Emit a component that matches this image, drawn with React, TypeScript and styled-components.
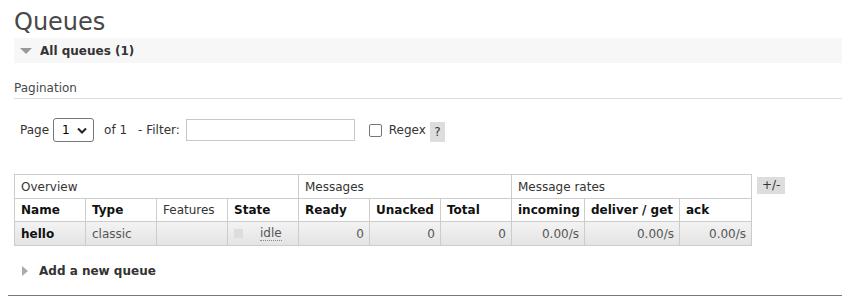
import styled, { createGlobalStyle } from "styled-components";

const Global = createGlobalStyle`
    html, body {
        margin: 0;
        padding: 0;
        background: #fff;
    }
    body {
        font-family: "DejaVu Sans", Verdana, sans-serif;
        font-size: 12px;
        color: #484848;
    }
`;

const Page = styled.div`
    width: 842px;
    height: 297px;
    padding-left: 8px;
    box-sizing: border-box;
    overflow: hidden;
`;

const Main = styled.div`
    padding-left: 6px;
`;

const Title = styled.h1`
    margin: 0;
    padding-top: 8px;
    height: 30px;
    font-size: 24px;
    line-height: 28px;
    font-weight: normal;
    color: #484848;
`;

const SectionBar = styled.div`
    display: flex;
    align-items: center;
    gap: 8px;
    height: 25px;
    padding-left: 6px;
    background: #f7f7f7;
    font-weight: bold;
    color: #333;
`;

const DownArrow = styled.span`
    width: 0;
    height: 0;
    border-left: 6px solid transparent;
    border-right: 6px solid transparent;
    border-top: 6px solid #999;
    margin-top: 1px;
`;

const RightArrow = styled.span`
    width: 0;
    height: 0;
    border-top: 5px solid transparent;
    border-bottom: 5px solid transparent;
    border-left: 6px solid #aaa;
    margin-left: 2px;
`;

const SubHeading = styled.div`
    margin-top: 18px;
    padding-bottom: 3px;
    border-bottom: 1px solid #ddd;
    color: #484848;
    line-height: 14px;
`;

const Controls = styled.div`
    display: flex;
    align-items: center;
    height: 24px;
    margin-top: 19px;
    padding-left: 6px;
    color: #333;
`;

const Select = styled.div`
    display: flex;
    align-items: center;
    justify-content: space-between;
    width: 41px;
    height: 24px;
    box-sizing: border-box;
    margin-left: 4px;
    padding: 0 6px 0 8px;
    border: 1px solid #767676;
    border-radius: 3px;
    color: #000;
`;

const Label = styled.span<{ $gap?: number }>`
    margin-left: ${p => p.$gap ?? 0}px;
`;

const TextInput = styled.div`
    width: 169px;
    height: 22px;
    box-sizing: border-box;
    margin-left: 6px;
    border: 1px solid #c8c8c8;
`;

const Check = styled.span`
    width: 13px;
    height: 13px;
    box-sizing: border-box;
    margin-left: 14px;
    border: 1px solid #767676;
    border-radius: 2px;
`;

const Help = styled.span`
    display: inline-flex;
    align-items: center;
    justify-content: center;
    width: 15px;
    height: 20px;
    margin-left: 4px;
    margin-top: 3px;
    background: #ddd;
    color: #333;
`;

const TableRow = styled.div`
    display: flex;
    align-items: flex-start;
    margin-top: 32px;
    gap: 5px;
`;

const Table = styled.table`
    border-collapse: collapse;
    table-layout: fixed;
    width: 737px;
`;

const GroupTh = styled.th`
    height: 23px;
    padding: 0 6px;
    border: 1px solid #ccc;
    text-align: left;
    font-weight: normal;
    color: #333;
`;

const Th = styled.th<{ $plain?: boolean }>`
    height: 22px;
    padding: 0 6px;
    border: 1px solid #ccc;
    text-align: left;
    font-weight: ${p => (p.$plain ? "normal" : "bold")};
    color: ${p => (p.$plain ? "#333" : "#111")};
    white-space: nowrap;
`;

const Td = styled.td<{ $num?: boolean; $strong?: boolean }>`
    height: 23px;
    padding: 0 5px 0 6px;
    border: 1px solid #ccc;
    text-align: ${p => (p.$num ? "right" : "left")};
    font-weight: ${p => (p.$strong ? "bold" : "normal")};
    color: ${p => (p.$strong ? "#111" : "#555")};
    white-space: nowrap;
`;

const DataRow = styled.tr`
    background: linear-gradient(#f3f3f3, #e3e3e3);
`;

const StateCell = styled.span`
    display: flex;
    align-items: center;
    gap: 17px;
`;

const StateDot = styled.span`
    width: 9px;
    height: 9px;
    background: #ddd;
`;

const Idle = styled.span`
    color: #555;
    border-bottom: 1px dotted #888;
    line-height: 13px;
`;

const ToggleBtn = styled.span`
    margin-top: 3px;
    padding: 0 5px;
    height: 17px;
    line-height: 17px;
    background: #ddd;
    color: #333;
`;

const AddBar = styled.div`
    display: flex;
    align-items: center;
    gap: 11px;
    margin-top: 17px;
    padding-left: 6px;
    height: 16px;
    font-weight: bold;
    color: #333;
`;

const Rule = styled.div`
    margin-top: 16px;
    border-top: 1px solid #777;
`;

export default function App() {
    const cols = [71, 71, 71, 71, 71, 71, 71, 73, 95, 72];
    return (
        <Page>
            <Global />
            <Main>
                <Title>Queues</Title>
                <SectionBar>
                    <DownArrow />
                    All queues (1)
                </SectionBar>
                <SubHeading>Pagination</SubHeading>
                <Controls>
                    Page
                    <Select>
                        1
                        <svg width="10" height="7" viewBox="0 0 10 7">
                            <path d="M1 1.5 L5 5.5 L9 1.5" fill="none" stroke="#222" strokeWidth="2" />
                        </svg>
                    </Select>
                    <Label $gap={10}>of 1</Label>
                    <Label $gap={11}>- Filter:</Label>
                    <TextInput />
                    <Check />
                    <Label $gap={7}>Regex</Label>
                    <Help>?</Help>
                </Controls>
                <TableRow>
                    <Table>
                        <colgroup>
                            {cols.map((w, i) => (
                                <col key={i} style={{ width: w }} />
                            ))}
                        </colgroup>
                        <thead>
                            <tr>
                                <GroupTh colSpan={4}>Overview</GroupTh>
                                <GroupTh colSpan={3}>Messages</GroupTh>
                                <GroupTh colSpan={3}>Message rates</GroupTh>
                            </tr>
                            <tr>
                                <Th>Name</Th>
                                <Th>Type</Th>
                                <Th $plain>Features</Th>
                                <Th>State</Th>
                                <Th>Ready</Th>
                                <Th>Unacked</Th>
                                <Th>Total</Th>
                                <Th>incoming</Th>
                                <Th>deliver / get</Th>
                                <Th>ack</Th>
                            </tr>
                        </thead>
                        <tbody>
                            <DataRow>
                                <Td $strong>hello</Td>
                                <Td>classic</Td>
                                <Td />
                                <Td>
                                    <StateCell>
                                        <StateDot />
                                        <Idle>idle</Idle>
                                    </StateCell>
                                </Td>
                                <Td $num>0</Td>
                                <Td $num>0</Td>
                                <Td $num>0</Td>
                                <Td $num>0.00/s</Td>
                                <Td $num>0.00/s</Td>
                                <Td $num>0.00/s</Td>
                            </DataRow>
                        </tbody>
                    </Table>
                    <ToggleBtn>+/-</ToggleBtn>
                </TableRow>
                <AddBar>
                    <RightArrow />
                    Add a new queue
                </AddBar>
            </Main>
            <Rule />
        </Page>
    );
}
